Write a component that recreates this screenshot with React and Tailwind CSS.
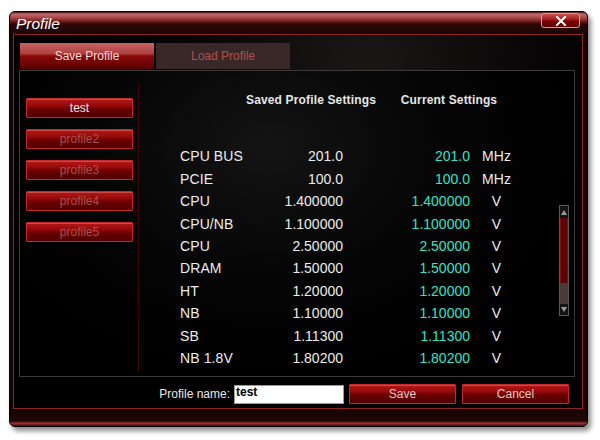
import React from "react";

const rows = [
  ["CPU BUS", "201.0", "201.0", "MHz"],
  ["PCIE", "100.0", "100.0", "MHz"],
  ["CPU", "1.400000", "1.400000", "V"],
  ["CPU/NB", "1.100000", "1.100000", "V"],
  ["CPU", "2.50000", "2.50000", "V"],
  ["DRAM", "1.50000", "1.50000", "V"],
  ["HT", "1.20000", "1.20000", "V"],
  ["NB", "1.10000", "1.10000", "V"],
  ["SB", "1.11300", "1.11300", "V"],
  ["NB 1.8V", "1.80200", "1.80200", "V"],
];

const profiles = ["test", "profile2", "profile3", "profile4", "profile5"];

function RedButton({ children, active, className = "" }) {
  return (
    <div
      className={
        "flex items-center justify-center border border-[#c02a2a] rounded-[1px] bg-[linear-gradient(to_bottom,#b01a1a_0%,#9a0a0a_35%,#6a0000_55%,#520000_100%)] shadow-[inset_0_1px_0_rgba(255,170,170,0.35)] text-[12px] leading-none " +
        (active ? "text-[#f2e4e4] " : "text-[#a85252] ") +
        className
      }
    >
      {children}
    </div>
  );
}

export default function App() {
  return (
    <div
      className="w-[600px] h-[440px] bg-white pt-[11px] pl-[9px] overflow-hidden"
      style={{ fontFamily: '"Liberation Sans", Arial, sans-serif' }}
    >
      <div className="w-[579px] h-[416px] rounded-[6px] border border-black bg-[#160404] flex flex-col overflow-hidden shadow-[3px_4px_5px_rgba(0,0,0,0.45)]">
        {/* Title bar */}
        <div className="h-[22px] flex items-start justify-between bg-[linear-gradient(to_bottom,#3a0c0c_0px,#c46a6a_2px,#a54444_6px,#661414_10px,#2c0707_12px,#1c0404_22px)]">
          <div className="pl-[6px] text-white italic text-[15.5px] leading-[23px]">
            Profile
          </div>
          <div className="mt-[1px] mr-[7px] w-[39px] h-[15px] rounded-[3px] border border-[#c8a0a0] bg-[linear-gradient(to_bottom,#c85050_0%,#a01818_45%,#780000_55%,#600000_100%)] flex items-center justify-center">
            <svg width="12" height="10" viewBox="0 0 12 10">
              <path d="M2 1 L10 9 M10 1 L2 9" stroke="#ffffff" strokeWidth="2" strokeLinecap="square" />
            </svg>
          </div>
        </div>

        {/* Body */}
        <div className="flex pl-[3px] pr-[2px]">
          <div className="w-[570px] h-[375px] border border-[#8a2626] bg-[radial-gradient(ellipse_at_62%_8%,#1a1717_0%,#070505_35%,#000000_60%)] flex flex-col">
            {/* Tabs */}
            <div className="flex gap-[2px] ml-[6px] mt-[8px] h-[27px]">
              <div className="w-[134px] h-[26px] flex items-center justify-center text-[12px] text-[#f2dcdc] bg-[linear-gradient(to_bottom,#c86464_0%,#b04040_40%,#8a0a0a_50%,#5a0000_100%)]">
                Save Profile
              </div>
              <div className="w-[134px] h-[26px] flex items-center justify-center text-[12px] text-[#b44c4c] bg-[#3a2828]">
                Load Profile
              </div>
            </div>

            {/* Panel */}
            <div className="ml-[5px] w-[556px] h-[307px] border border-[#3c3c3c] flex bg-[radial-gradient(ellipse_at_45%_25%,#141414_0%,#050505_40%,#000000_70%)]">
              {/* Profile list */}
              <div className="w-[118px] pl-[6px] pt-[27px] flex flex-col gap-[11px]">
                {profiles.map((p, i) => (
                  <RedButton key={p} active={i === 0} className="w-[107px] h-[20px]">
                    {p}
                  </RedButton>
                ))}
              </div>
              <div className="w-[1px] mt-[12px] mb-[4px] bg-[#3a0606]" />

              {/* Main */}
              <div className="flex-1 flex">
                <div className="flex-1 pt-[21px]">
                  <div className="flex h-[16px] text-[12px] leading-[16px] font-bold text-[#e6e6e6]">
                    <div className="ml-[92px] w-[160px] text-center tracking-[0.15px]">
                      Saved Profile Settings
                    </div>
                    <div className="ml-[2px] w-[112px] text-center tracking-[0.15px]">Current Settings</div>
                  </div>
                  <div className="mt-[37px] flex flex-col">
                    {rows.map((r, i) => (
                      <div key={i} className="flex h-[22.45px] items-center text-[14px] leading-none">
                        <div className="pl-[41px] w-[131px] text-[#ececec] tracking-[0.1px]">{r[0]}</div>
                        <div className="w-[73px] text-right text-[#ececec]">{r[1]}</div>
                        <div className="w-[127px] text-right text-[#36e2c6]">{r[2]}</div>
                        <div className="ml-[12px] w-[29px] text-center text-[#ececec]">{r[3]}</div>
                      </div>
                    ))}
                  </div>
                </div>

                {/* Scrollbar */}
                <div className="mt-[134px] mr-[5px] w-[10px] h-[111px] border border-[#5a5a5a] flex flex-col bg-[#1a1a1a]">
                  <div className="h-[12px] flex items-center justify-center bg-[#141414]">
                    <svg width="6" height="5" viewBox="0 0 6 5">
                      <polygon points="3,0 6,5 0,5" fill="#9a9a9a" />
                    </svg>
                  </div>
                  <div className="h-[65px] bg-[#5c0000] border-x border-[#820e0e]" />
                  <div className="h-[21px] bg-[#4a3a3a]" />
                  <div className="flex-1 flex items-center justify-center bg-[#141414]">
                    <svg width="6" height="5" viewBox="0 0 6 5">
                      <polygon points="0,0 6,0 3,5" fill="#9a9a9a" />
                    </svg>
                  </div>
                </div>
              </div>
            </div>

            {/* Bottom row */}
            <div className="mt-[7px] h-[20px] flex items-center justify-end pr-[13px]">
              <div className="text-[12px] text-[#e8e8e8] mr-[4px]">Profile name:</div>
              <div className="w-[110px] h-[19px] bg-white border border-[#9a9a9a] text-[12px] font-bold text-black leading-[13px] pl-[1px]">
                test
              </div>
              <RedButton active className="ml-[5px] w-[107px] h-[20px] !text-[#e4c8c8]">
                Save
              </RedButton>
              <RedButton active className="ml-[6px] w-[107px] h-[20px] !text-[#e4c8c8]">
                Cancel
              </RedButton>
            </div>
          </div>
        </div>

        {/* Bottom frame */}
        <div className="flex-1 bg-[linear-gradient(to_bottom,#160404_0%,#220606_70%,#9a3030_85%,#3a0a0a_100%)]" />
      </div>
    </div>
  );
}
